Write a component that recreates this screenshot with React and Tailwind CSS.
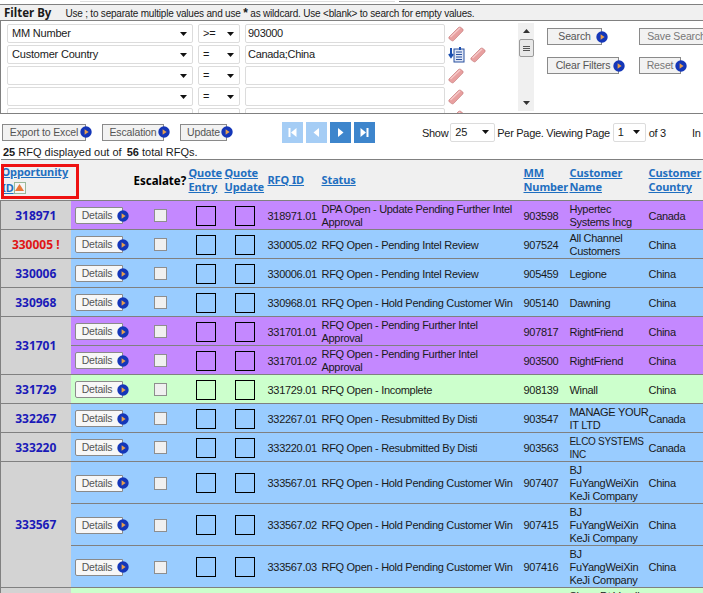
import React from 'react';

const sans = { fontFamily: '"Liberation Sans", Arial, sans-serif' };
const bold = { fontFamily: '"Noto Sans", sans-serif' };

const PlayDot = () => (
  <svg width="12" height="12" viewBox="0 0 12 12" className="shrink-0">
    <circle cx="6" cy="6" r="5.7" fill="#1436b8" />
    <path d="M4.6 3.2L8.6 6L4.6 8.8Z" fill="#e8a04c" />
  </svg>
);

const Eraser = () => (
  <svg width="16" height="16" viewBox="0 0 16 16" className="shrink-0">
    <path d="M1 11L10.5 1.5Q11.5 .8 12.5 1.3L14.8 3Q15.5 4 14.8 5L5.5 14.6Q4.5 15.2 3.6 14.6L1.2 12.8Q.5 12 1 11Z" fill="#e8a0a0" stroke="#c77c7c" strokeWidth=".7" />
    <path d="M2.5 11L12 2" stroke="#f6caca" strokeWidth="1.2" />
  </svg>
);

const Btn = ({ label, muted = false, w }) => (
  <div className={`flex items-center shrink-0 ${w}`}>
    <div className={`h-[17px] flex-1 border border-[#8a8a8a] bg-[#f2f2f2] flex items-center justify-center text-[10.5px] tracking-[-0.15px] leading-none whitespace-nowrap ${muted ? 'text-[#777]' : 'text-[#555]'}`}>
      {label}
    </div>
    <div className="-ml-[6px]"><PlayDot /></div>
  </div>
);

const FakeSelect = ({ value, w }) => (
  <div className={`${w} h-[19px] shrink-0 bg-white border border-[#dcdcdc] rounded-[2px] flex items-center justify-between px-1 text-[11px] tracking-[-0.2px] leading-none`}>
    <span>{value}</span>
    <svg width="7" height="4" viewBox="0 0 7 4" className="shrink-0 mr-[1px]"><path d="M0 0H7L3.5 4Z" fill="#111" /></svg>
  </div>
);

const FilterRow = ({ field, op, value, hasList }) => (
  <div className="flex items-center h-[21px] shrink-0">
    <FakeSelect value={field} w="w-[186px]" />
    <div className="w-[5px]" />
    <FakeSelect value={op} w="w-[42px]" />
    <div className="w-[5px]" />
    <div className="w-[200px] h-[19px] bg-white border border-[#dcdcdc] rounded-[2px] px-[2px] flex items-center text-[11px] tracking-[-0.3px] leading-none">{value}</div>
    <div className="ml-[3px] flex items-center">
      {hasList && (
        <svg width="17" height="17" viewBox="0 0 17 17" className="mr-[5px] shrink-0">
          <rect x="6" y="3" width="10" height="13" fill="#dfe6f5" stroke="#29509f" />
          <path d="M8 6H14M8 8.5H14M8 11H14M8 13.5H14" stroke="#29509f" />
          <path d="M3 2V10M1 8L3 11L5 8" stroke="#1b4fb0" strokeWidth="2" fill="none" />
          <path d="M12 4V1" stroke="#1b4fb0" strokeWidth="2" />
        </svg>
      )}
      <Eraser />
    </div>
  </div>
);

const PageBtn = ({ on, kind }) => (
  <div className={`w-[21px] h-[21px] flex items-center justify-center ${on ? 'bg-[#3d85cc]' : 'bg-[#a5cdf5]'}`}>
    <svg width="11" height="11" viewBox="0 0 11 11">
      {kind === 'first' && <path d="M1.5 1H3.5V10H1.5ZM9.5 1V10L4 5.5Z" fill="#fff" />}
      {kind === 'prev' && <path d="M8 1V10L2.5 5.5Z" fill="#fff" />}
      {kind === 'next' && <path d="M3 1V10L8.5 5.5Z" fill="#fff" />}
      {kind === 'last' && <path d="M1.5 1V10L7 5.5ZM7.5 1H9.5V10H7.5Z" fill="#fff" />}
    </svg>
  </div>
);

const HeadLink = ({ children }) => (
  <span className="text-[#1f6fc0] underline font-bold text-[11px] tracking-[-0.1px] leading-[13px]" style={bold}>{children}</span>
);

const groups = [
  { id: '318971', rows: [['318971.01', 'DPA Open - Update Pending Further Intel Approval', '903598', 'Hypertec\nSystems Incg', 'Canada', 'p']] },
  { id: '330005 !', red: true, rows: [['330005.02', 'RFQ Open - Pending Intel Review', '907524', 'All Channel\nCustomers', 'China', 'b']] },
  { id: '330006', rows: [['330006.01', 'RFQ Open - Pending Intel Review', '905459', 'Legione', 'China', 'b']] },
  { id: '330968', rows: [['330968.01', 'RFQ Open - Hold Pending Customer Win', '905140', 'Dawning', 'China', 'b']] },
  { id: '331701', rows: [
    ['331701.01', 'RFQ Open - Pending Further Intel Approval', '907817', 'RightFriend', 'China', 'p'],
    ['331701.02', 'RFQ Open - Pending Further Intel Approval', '903500', 'RightFriend', 'China', 'p'],
  ] },
  { id: '331729', rows: [['331729.01', 'RFQ Open - Incomplete', '908139', 'Winall', 'China', 'g']] },
  { id: '332267', rows: [['332267.01', 'RFQ Open - Resubmitted By Disti', '903547', 'MANAGE YOUR\nIT LTD', 'Canada', 'b']] },
  { id: '333220', rows: [['333220.01', 'RFQ Open - Resubmitted By Disti', '903563', 'ELCO SYSTEMS\nINC', 'Canada', 'b', true]] },
  { id: '333567', tall: true, rows: [
    ['333567.01', 'RFQ Open - Hold Pending Customer Win', '907407', 'BJ\nFuYangWeiXin\nKeJi Company', 'China', 'b'],
    ['333567.02', 'RFQ Open - Hold Pending Customer Win', '907415', 'BJ\nFuYangWeiXin\nKeJi Company', 'China', 'b'],
    ['333567.03', 'RFQ Open - Hold Pending Customer Win', '907416', 'BJ\nFuYangWeiXin\nKeJi Company', 'China', 'b'],
  ] },
];

const rowBg = { p: 'bg-[#c488ff]', b: 'bg-[#99ccff]', g: 'bg-[#ccffcc]' };

const Box = () => <div className="w-[20px] h-[20px] border border-black mx-auto" />;

const cell = 'border-b border-[#808080] p-0 align-middle';
const text = 'border-b border-[#808080] p-0 pt-[2px] align-middle';

export default function App() {
  return (
    <div className="w-[703px] h-[593px] overflow-hidden bg-white text-[#1a1a1a] text-[11px]" style={sans}>
      <div className="h-[4px] flex">
        <div className="ml-[80px] w-[315px] h-[2px] border-b border-[#dedede]" />
        <div className="ml-[4px] w-[81px] h-[2px] border-b border-[#777]" />
      </div>

      <div className="h-[17px] bg-[#f0f0f0] border-y border-[#808080] flex items-center pl-[4px] whitespace-nowrap overflow-hidden">
        <span className="font-bold text-[11.5px] mr-[14px]" style={bold}>Filter By</span>
        <span className="text-[10px] tracking-[-0.2px]">Use ; to separate multiple values and use <b className="text-[12px]">*</b> as wildcard. Use &lt;blank&gt; to search for empty values.</span>
      </div>

      <div className="h-[93px] border-b border-[#808080] flex overflow-hidden">
        <div className="w-[518px] shrink-0 border-l border-[#808080] flex flex-col pt-[2px] pl-[6px] overflow-hidden">
          <FilterRow field="MM Number" op=">=" value="903000" />
          <FilterRow field="Customer Country" op="=" value="Canada;China" hasList />
          <FilterRow field="" op="=" value="" />
          <FilterRow field="" op="=" value="" />
          <FilterRow field="" op="=" value="" />
        </div>
        <div className="w-[16px] shrink-0 bg-[#f0f0f0] my-[2px] flex flex-col items-center">
          <svg width="7" height="4" viewBox="0 0 7 4" className="mt-[6px]"><path d="M0 4H7L3.5 0Z" fill="#333" /></svg>
          <div className="w-[15px] h-[18px] mt-[6px] bg-[#e8e8e8] border border-[#9a9a9a] rounded-[2px] flex flex-col items-center justify-center gap-[1px]">
            <div className="w-[7px] h-[1px] bg-[#555]" />
            <div className="w-[7px] h-[1px] bg-[#555]" />
            <div className="w-[7px] h-[1px] bg-[#555]" />
          </div>
          <div className="flex-1" />
          <svg width="7" height="4" viewBox="0 0 7 4" className="mb-[6px]"><path d="M0 0H7L3.5 4Z" fill="#333" /></svg>
        </div>
        <div className="flex-1 pl-[13px] pt-[7px] overflow-hidden">
          <div className="flex">
            <Btn label="Search" w="w-[61px]" />
            <div className="w-[31px] shrink-0" />
            <Btn label="Save Search" muted w="w-[81px]" />
          </div>
          <div className="flex mt-[12px]">
            <Btn label="Clear Filters" w="w-[78px]" />
            <div className="w-[14px] shrink-0" />
            <Btn label="Reset" muted w="w-[48px]" />
          </div>
        </div>
      </div>

      <div className="h-[32px] flex items-center whitespace-nowrap overflow-hidden pt-[4px] text-[11px] tracking-[-0.3px]">
        <div className="flex pl-[2px]">
          <Btn label="Export to Excel" w="w-[90px]" />
          <div className="w-[10px]" />
          <Btn label="Escalation" w="w-[68px]" />
          <div className="w-[10px]" />
          <Btn label="Update" w="w-[53px]" />
        </div>
        <div className="flex gap-[3px] ml-[49px]">
          <PageBtn kind="first" />
          <PageBtn kind="prev" />
          <PageBtn kind="next" on />
          <PageBtn kind="last" on />
        </div>
        <span className="ml-[47px] mt-[3px]">Show</span>
        <FakeSelect value="25" w="w-[45px] ml-[2px]" />
        <span className="ml-[2px] mt-[3px]">Per Page. Viewing Page</span>
        <FakeSelect value="1" w="w-[33px] ml-[3px]" />
        <span className="ml-[3px] mt-[3px]">of 3</span>
        <span className="ml-[26px] mt-[3px]">In</span>
      </div>

      <div className="h-[13px] leading-[13px] pl-[3px] whitespace-nowrap text-[11px]">
        <b>25</b> RFQ displayed out of <b className="ml-[2px]">56</b> total RFQs.
      </div>

      <table className="table-fixed border-collapse w-[720px] border-t border-[#808080] text-[11px] tracking-[-0.3px] leading-[13px]">
        <colgroup>
          <col className="w-[70px]" />
          <col className="w-[63px]" />
          <col className="w-[54px]" />
          <col className="w-[37px]" />
          <col className="w-[41px]" />
          <col className="w-[55px]" />
          <col className="w-[202px]" />
          <col className="w-[46px]" />
          <col className="w-[79px]" />
          <col className="w-[73px]" />
        </colgroup>
        <thead>
          <tr className="h-[41px] bg-[#f0f0f0]">
            <th className={`${cell} relative text-left font-normal pl-[1px]`}>
              <HeadLink>Opportunity</HeadLink>
              <br />
              <span className="inline-flex items-center mt-[2px]">
                <HeadLink>ID</HeadLink>
                <span className="w-[12px] h-[12px] border border-[#9ab89a] bg-[#f5f5f5] inline-flex items-center justify-center">
                  <svg width="9" height="7" viewBox="0 0 9 7"><path d="M0 7L4.5 0L9 7Z" fill="#e8793a" /></svg>
                </span>
              </span>
              <div className="absolute left-0 top-[4px] w-[78px] h-[35px] border-[3px] border-[#ee1111]" />
            </th>
            <th className={cell} />
            <th className={`${cell} text-left font-bold text-black text-[11.5px] tracking-normal`} style={bold}>Escalate?</th>
            <th className={`${cell} text-left font-normal pl-[1px]`}><HeadLink>Quote Entry</HeadLink></th>
            <th className={`${cell} text-left font-normal`}><HeadLink>Quote Update</HeadLink></th>
            <th className={`${cell} text-left font-normal pl-[2px]`}><HeadLink>RFQ ID</HeadLink></th>
            <th className={`${cell} text-left font-normal pl-[1px]`}><HeadLink>Status</HeadLink></th>
            <th className={`${cell} text-left font-normal pl-[1px]`}><HeadLink>MM Number</HeadLink></th>
            <th className={`${cell} text-left font-normal pl-[1px]`}><HeadLink>Customer Name</HeadLink></th>
            <th className={`${cell} text-left font-normal pl-[1px]`}><HeadLink>Customer Country</HeadLink></th>
          </tr>
        </thead>
        <tbody>
          {groups.map((g) =>
            g.rows.map((r, i) => (
              <tr key={r[0]} className={`${g.tall ? 'h-[42px]' : 'h-[29px]'} ${rowBg[r[5]]}`}>
                {i === 0 && (
                  <td rowSpan={g.rows.length} className={`${cell} bg-[#d3d3d3] border-l border-[#808080] text-center font-bold text-[12px] tracking-normal ${g.red ? 'text-[#e01515]' : 'text-[#1a1ab8]'}`} style={bold}>
                    {g.id}
                  </td>
                )}
                <td className={`${cell} pt-[1px] pl-[4px]`}>
                  <div className="flex items-center">
                    <div className="w-[48px] h-[17px] bg-[#f7f7f7] border border-[#8a8a8a] rounded-l-[2px] flex items-center justify-center pr-[3px] text-[10.5px] tracking-[-0.2px] leading-none text-[#555]">Details</div>
                    <div className="-ml-[6px]"><PlayDot /></div>
                  </div>
                </td>
                <td className={`${cell} pt-[1px]`}>
                  <div className="w-[13px] h-[13px] ml-[20px] bg-[#f0f0f0] border border-[#8e8e8e]" />
                </td>
                <td className={`${cell} pt-[1px]`}><Box /></td>
                <td className={`${cell} pt-[1px]`}><Box /></td>
                <td className={`${text} pl-[2px]`}>{r[0]}</td>
                <td className={`${text} pl-[1px] pr-[3px]`}>{r[1]}</td>
                <td className={`${text} pl-[1px]`}>{r[2]}</td>
                <td className={`${text} pl-[1px] whitespace-pre ${r[6] ? 'text-[10px]' : ''}`}>{r[3]}</td>
                <td className={`${text} pl-[1px]`}>{r[4]}</td>
              </tr>
            ))
          )}
          <tr className="h-[42px] bg-[#ccffcc]">
            <td className="bg-[#d3d3d3] border-l border-[#808080]" />
            <td colSpan={7} />
            <td className="pl-[1px] pt-[2px] align-top">Sharp Dt Vendin</td>
            <td />
          </tr>
        </tbody>
      </table>
    </div>
  );
}
